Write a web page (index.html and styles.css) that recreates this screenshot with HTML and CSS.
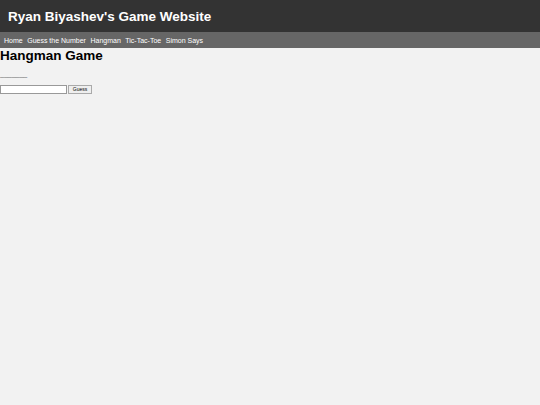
FILE: index.html
```html
<!DOCTYPE html>
<html>
<head>
<meta charset="utf-8">
<link rel="stylesheet" href="styles.css">
</head>
<body>
<header class="site-header">
  <h1 class="site-title">Ryan Biyashev's Game Website</h1>
</header>
<nav class="site-nav">
  <a href="#">Home</a>
  <a href="#">Guess the Number</a>
  <a href="#">Hangman</a>
  <a href="#">Tic-Tac-Toe</a>
  <a href="#">Simon Says</a>
</nav>
<main class="game">
  <h2 class="game-title">Hangman Game</h2>
  <p class="word">_______</p>
  <div class="guess-row">
    <input class="guess-input" type="text">
    <button class="guess-btn">Guess</button>
  </div>
</main>
</body>
</html>
```
FILE: styles.css
```css
html, body {
  margin: 0;
  padding: 0;
  background: #f2f2f2;
  font-family: "Liberation Sans", Arial, sans-serif;
  height: 100%;
}
.site-header {
  background: #333333;
  height: 32px;
  display: flex;
  align-items: center;
  padding: 0 8px;
}
.site-title {
  margin: 0;
  color: #ffffff;
  font-size: 13.5px;
  font-weight: bold;
}
.site-nav {
  background: #666666;
  height: 16px;
  display: flex;
  align-items: center;
  padding: 0 4px;
  gap: 4.5px;
}
.site-nav a {
  color: #ffffff;
  text-decoration: none;
  font-size: 7px;
}
.game-title {
  margin: 0;
  font-size: 13.5px;
  font-weight: bold;
  color: #000;
  line-height: 16px;
}
.word {
  margin: 6px 0 0 0;
  font-size: 7px;
  line-height: 8px;
  color: #666;
}
.guess-row {
  display: flex;
  align-items: center;
  gap: 1px;
  margin-top: 7px;
}
.guess-input {
  width: 67px;
  height: 9px;
  box-sizing: border-box;
  border: 1px solid #999;
  background: #fff;
  padding: 0;
  margin: 0;
}
.guess-btn {
  width: 24px;
  height: 9px;
  box-sizing: border-box;
  font-size: 5px;
  padding: 0;
  margin: 0;
  border: 1px solid #aaa;
  background: #efefef;
  color: #000;
  font-family: "Liberation Sans", Arial, sans-serif;
  line-height: 7px;
}
```
